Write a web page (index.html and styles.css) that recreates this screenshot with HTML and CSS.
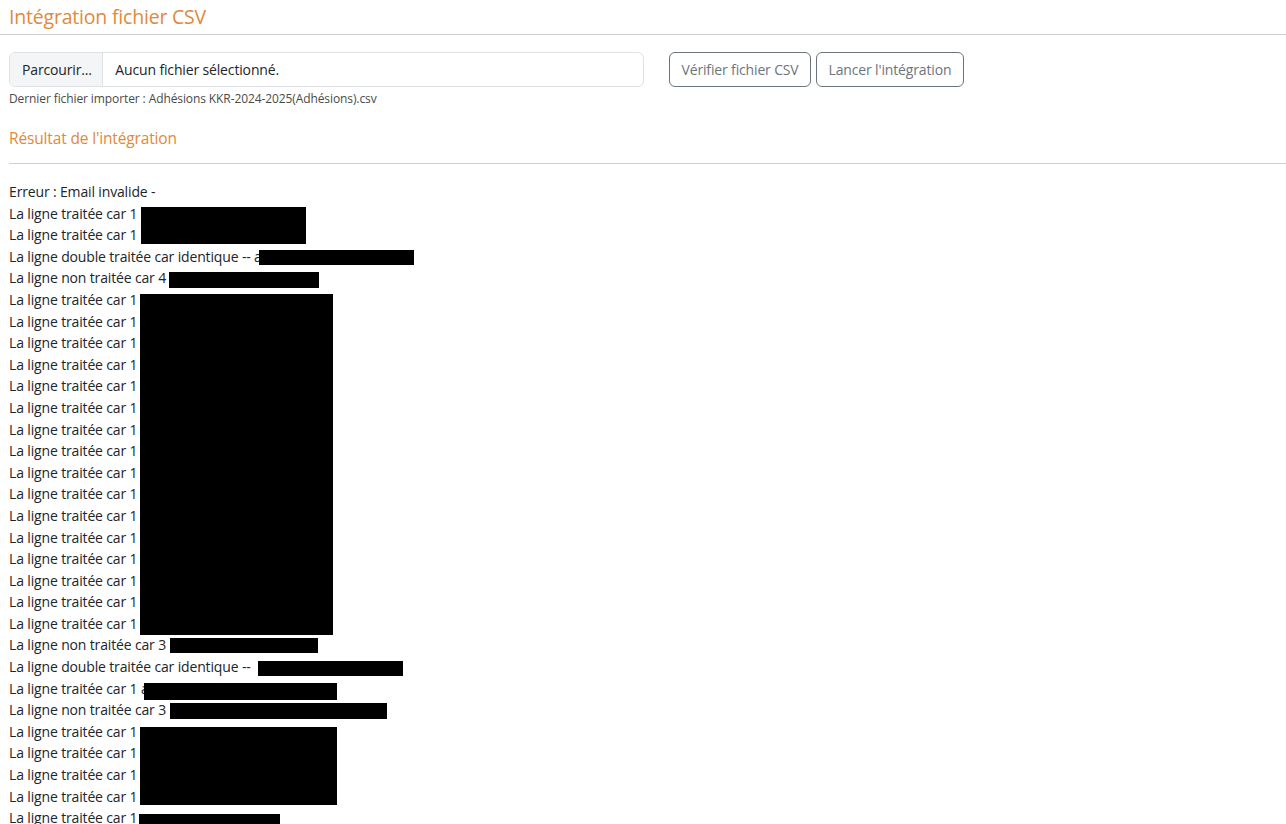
FILE: index.html
```html
<!DOCTYPE html>
<html lang="fr">
<head>
<meta charset="utf-8">
<title>Intégration fichier CSV</title>
<link rel="stylesheet" href="styles.css">
</head>
<body>
<header class="page-header">
  <h1 class="page-title">Intégration fichier CSV</h1>
</header>
<main class="content">
  <div class="form-row">
    <div class="input-group">
      <span class="file-btn">Parcourir...</span>
      <span class="file-name">Aucun fichier sélectionné.</span>
    </div>
    <div class="actions">
      <button class="btn-outline">Vérifier fichier CSV</button>
      <button class="btn-outline">Lancer l'intégration</button>
    </div>
  </div>
  <p class="last-file">Dernier fichier importer : Adhésions KKR-2024-2025(Adhésions).csv</p>

  <h2 class="section-title">Résultat de l'intégration</h2>
  <hr class="divider">

  <div class="results">
    <div class="line">Erreur : Email invalide -</div>
    <div class="line">La ligne traitée car 1</div>
    <div class="line">La ligne traitée car 1</div>
    <div class="line">La ligne double traitée car identique -- a</div>
    <div class="line">La ligne non traitée car 4</div>
    <div class="line">La ligne traitée car 1</div>
    <div class="line">La ligne traitée car 1</div>
    <div class="line">La ligne traitée car 1</div>
    <div class="line">La ligne traitée car 1</div>
    <div class="line">La ligne traitée car 1</div>
    <div class="line">La ligne traitée car 1</div>
    <div class="line">La ligne traitée car 1</div>
    <div class="line">La ligne traitée car 1</div>
    <div class="line">La ligne traitée car 1</div>
    <div class="line">La ligne traitée car 1</div>
    <div class="line">La ligne traitée car 1</div>
    <div class="line">La ligne traitée car 1</div>
    <div class="line">La ligne traitée car 1</div>
    <div class="line">La ligne traitée car 1</div>
    <div class="line">La ligne traitée car 1</div>
    <div class="line">La ligne traitée car 1</div>
    <div class="line">La ligne non traitée car 3</div>
    <div class="line">La ligne double traitée car identique --</div>
    <div class="line">La ligne traitée car 1 a</div>
    <div class="line">La ligne non traitée car 3</div>
    <div class="line">La ligne traitée car 1</div>
    <div class="line">La ligne traitée car 1</div>
    <div class="line">La ligne traitée car 1</div>
    <div class="line">La ligne traitée car 1</div>
    <div class="line">La ligne traitée car 1</div>

    <span class="redact" style="left:132px;top:26px;width:165px;height:37px"></span>
    <span class="redact" style="left:250px;top:69px;width:155px;height:15px"></span>
    <span class="redact" style="left:160px;top:91px;width:150px;height:16px"></span>
    <span class="redact" style="left:131px;top:113px;width:193px;height:341px"></span>
    <span class="redact" style="left:161px;top:457px;width:148px;height:15px"></span>
    <span class="redact" style="left:249px;top:480px;width:145px;height:15px"></span>
    <span class="redact" style="left:135px;top:502px;width:193px;height:17px"></span>
    <span class="redact" style="left:161px;top:522px;width:217px;height:16px"></span>
    <span class="redact" style="left:131px;top:546px;width:197px;height:78px"></span>
    <span class="redact" style="left:130px;top:633px;width:141px;height:20px"></span>
  </div>
</main>
</body>
</html>
```

FILE: styles.css
```css
html, body {
  margin: 0;
  padding: 0;
  background: #ffffff;
}

body {
  font-family: "Open Sans", "Noto Sans", "Liberation Sans", sans-serif;
  color: #212529;
  font-size: 14px;
  letter-spacing: -0.15px;
  line-height: 1.5;
  overflow: hidden;
  height: 824px;
}

.page-header {
  padding: 5px 9px;
  border-bottom: 1px solid #cfcfcf;
  height: 24px;
}

.page-title {
  margin: 0;
  font-size: 19.5px;
  letter-spacing: -0.2px;
  font-weight: 400;
  line-height: 24px;
  color: #e08a3a;
}

.content {
  padding: 0 0 0 9px;
}

.form-row {
  display: flex;
  align-items: stretch;
  margin-top: 17px;
  height: 35px;
}

.input-group {
  display: flex;
  width: 635px;
  border: 1px solid #dee2e6;
  border-radius: 6px;
  box-sizing: border-box;
  overflow: hidden;
  margin-right: 25px;
}

.file-btn {
  display: flex;
  align-items: center;
  padding: 0 10.5px 0 12px;
  background: #f4f5f7;
  border-right: 1px solid #dee2e6;
  color: #212529;
}

.file-name {
  display: flex;
  align-items: center;
  padding: 0 12px;
  color: #212529;
}

.actions {
  display: flex;
  gap: 5px;
}

.btn-outline {
  font: inherit;
  letter-spacing: inherit;
  color: #6c757d;
  background: #fff;
  border: 1px solid #6c757d;
  border-radius: 6px;
  padding: 0 11.5px;
  height: 35px;
  cursor: pointer;
}

.last-file {
  margin: 3px 0 0;
  font-size: 12px;
  letter-spacing: -0.1px;
  line-height: 18px;
  color: #4a4a4a;
}

.section-title {
  margin: 18px 0 0;
  font-size: 15.5px;
  letter-spacing: -0.15px;
  font-weight: 400;
  line-height: 24px;
  color: #e08a3a;
}

.divider {
  margin: 13px 0 0;
  border: 0;
  border-top: 1px solid #cfcfcf;
  height: 0;
}

.results {
  position: relative;
  margin-top: 17px;
}

.line {
  height: 21.6px;
  line-height: 21.6px;
  white-space: nowrap;
}

.redact {
  position: absolute;
  background: #000;
}
```
